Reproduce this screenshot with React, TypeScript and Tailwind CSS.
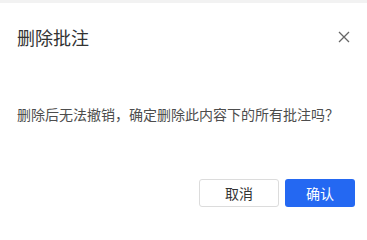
export default function App() {
  return (
    <div
      className="flex h-[211px] w-[367px] flex-col bg-white"
      style={{ fontFamily: '"Noto Sans CJK SC", "Noto Sans", sans-serif' }}
    >
      <div className="h-[3px] bg-[#f2f2f2]" />
      <div className="flex h-[68px] items-center justify-between pl-[17px] pr-[15px]">
        <span className="text-[18px] leading-6 text-[#333333]">删除批注</span>
        <button className="flex h-4 w-4 items-center justify-center">
          <svg width="12" height="12" viewBox="0 0 12 12" fill="none">
            <path d="M1 1L11 11M11 1L1 11" stroke="#666666" strokeWidth="1.3" />
          </svg>
        </button>
      </div>
      <p className="mt-[32px] pl-[17px] text-[14px] leading-[22px] text-[#4d4d4d]">
        删除后无法撤销，确定删除此内容下的所有批注吗？
      </p>
      <div className="mt-[54px] flex justify-end gap-[6px] pr-[12px]">
        <button className="h-[28px] w-[80px] rounded-[3px] border border-[#dcdcdc] bg-white text-[14px] text-[#333333]">
          取消
        </button>
        <button className="h-[28px] w-[70px] rounded-[3px] bg-[#2468f2] text-[14px] text-white">
          确认
        </button>
      </div>
    </div>
  );
}
